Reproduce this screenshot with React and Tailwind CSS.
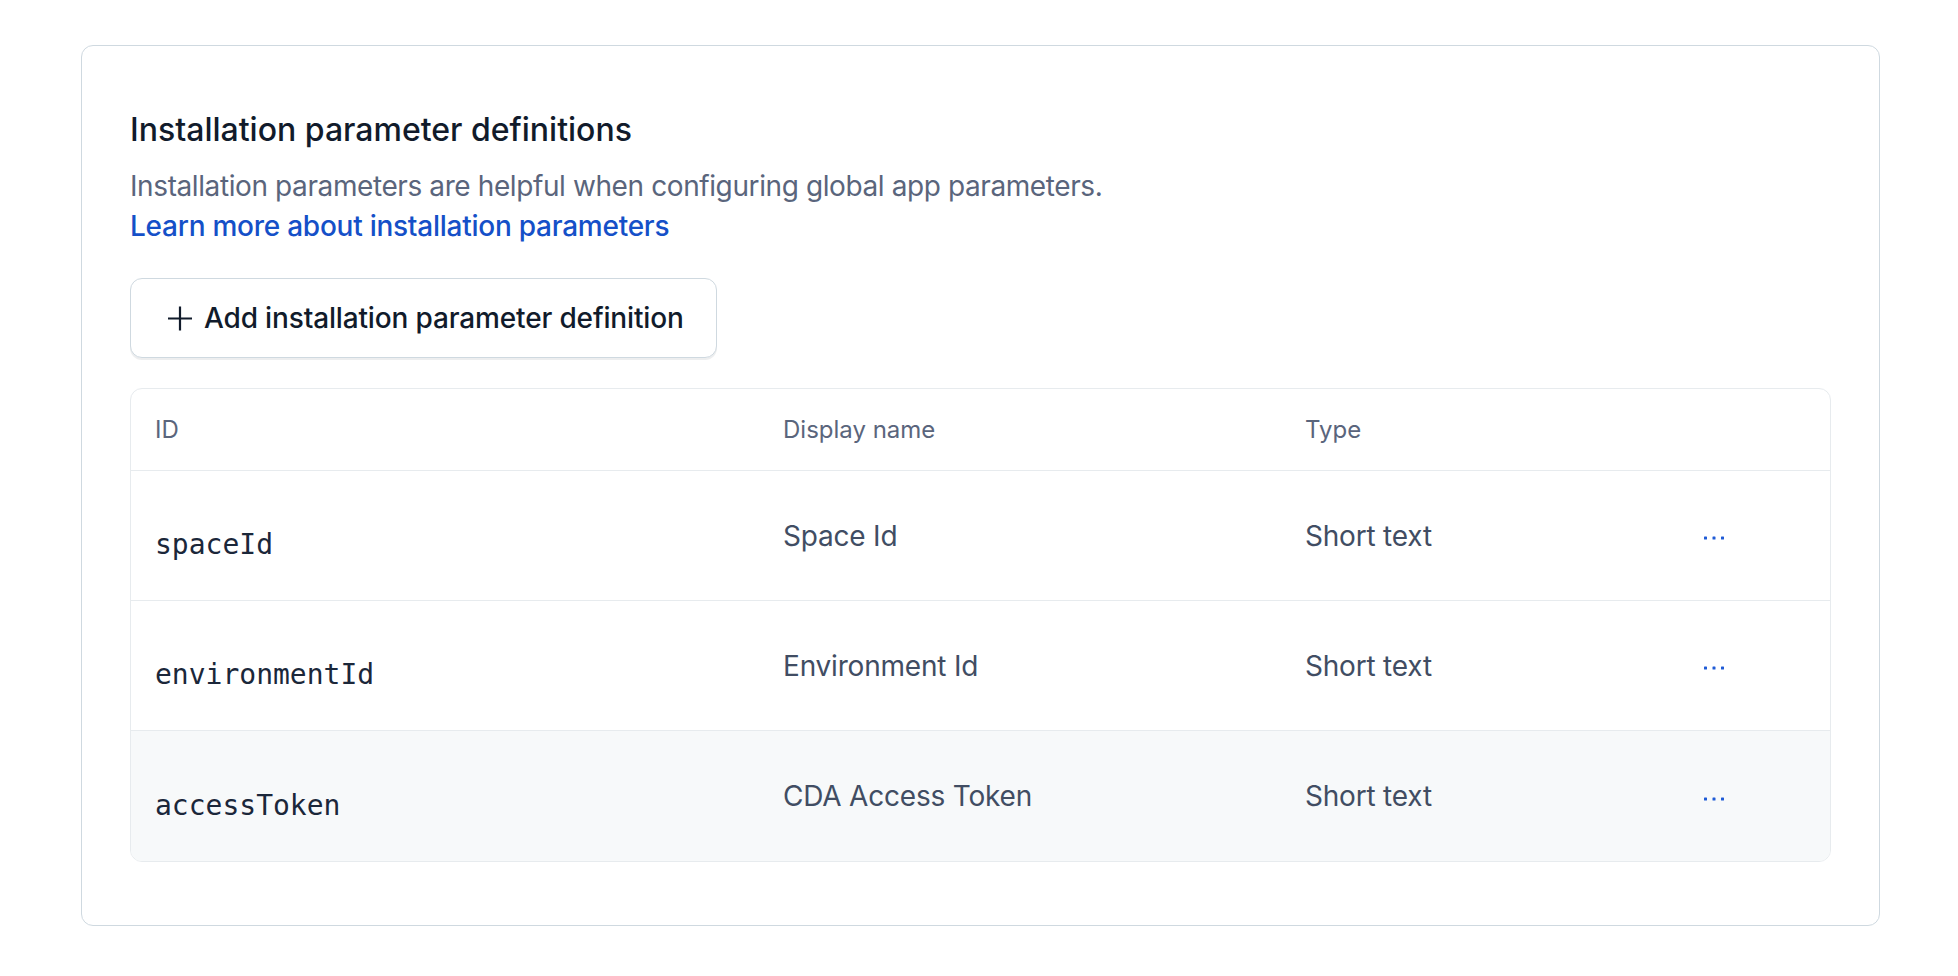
import React from "react";

const rows = [
  { id: "spaceId", name: "Space Id", type: "Short text", hover: false },
  { id: "environmentId", name: "Environment Id", type: "Short text", hover: false },
  { id: "accessToken", name: "CDA Access Token", type: "Short text", hover: true },
];

function Dots() {
  return (
    <svg width="22" height="4" viewBox="0 0 22 4" className="block">
      <rect x="0" y="0.5" width="3" height="3" rx="0.6" fill="#1f5bd6" />
      <rect x="8.5" y="0.5" width="3" height="3" rx="0.6" fill="#1f5bd6" />
      <rect x="17" y="0.5" width="3" height="3" rx="0.6" fill="#1f5bd6" />
    </svg>
  );
}

function PlusIcon() {
  return (
    <svg width="32" height="32" viewBox="0 0 32 32" className="block shrink-0">
      <path d="M16 4.5V28.5M4 16.5H28" stroke="#111b2b" strokeWidth="2.2" fill="none" />
    </svg>
  );
}

export default function App() {
  return (
    <div
      className="min-h-screen bg-white"
      style={{ fontFamily: "Inter, 'Noto Sans', sans-serif" }}
    >
      <div className="pt-[45px] pl-[81px]">
        <div className="w-[1799px] rounded-[12px] border border-[#cfd9e0] px-[48px] pt-[64px] pb-[63px]">
          <h2 className="text-[32px] leading-[40px] font-medium text-[#111b2b]">
            Installation parameter definitions
          </h2>
          <p className="mt-[16px] text-[28px] leading-[40px] text-[#5a657c] tracking-[-0.4px]">
            Installation parameters are helpful when configuring global app parameters.
          </p>
          <a className="block w-fit text-[28px] leading-[40px] text-[#1550c8] font-medium tracking-[-0.25px]">
            Learn more about installation parameters
          </a>
          <button className="mt-[32px] flex h-[80px] w-[587px] items-center gap-[8px] rounded-[12px] border border-[#cfd9e0] bg-white pl-[33px] shadow-[0_2px_0_rgba(25,37,50,0.08)]">
            <PlusIcon />
            <span className="text-[28px] leading-[40px] font-medium text-[#111b2b] tracking-[-0.15px]">
              Add installation parameter definition
            </span>
          </button>

          <div className="mt-[30px] overflow-hidden rounded-[12px] border border-[#e7ebee]">
            <div className="grid h-[82px] grid-cols-[628px_522px_400px_1fr] items-center border-b border-[#e7ebee] text-[24px] leading-[32px] text-[#5a657c]">
              <div className="pl-[24px]">ID</div>
              <div className="pl-[24px]">Display name</div>
              <div className="pl-[24px]">Type</div>
              <div />
            </div>
            {rows.map((r, i) => (
              <div
                key={r.id}
                className={
                  "grid h-[130px] grid-cols-[628px_522px_400px_1fr] items-center " +
                  (i < rows.length - 1 ? "border-b border-[#e7ebee] " : "") +
                  (r.hover ? "bg-[#f7f9fa]" : "bg-white")
                }
              >
                <div
                  className="pl-[24px] pt-[19px] text-[28px] leading-[40px] text-[#1b273a]"
                  style={{ fontFamily: "'DejaVu Sans Mono', 'Liberation Mono', monospace" }}
                >
                  {r.id}
                </div>
                <div className="pl-[24px] text-[28px] leading-[40px] text-[#414d63] tracking-[-0.2px]">{r.name}</div>
                <div className="pl-[24px] text-[28px] leading-[40px] text-[#414d63] tracking-[-0.2px]">{r.type}</div>
                <div className="pl-[23px] pt-[5px] flex items-center">
                  <Dots />
                </div>
              </div>
            ))}
          </div>
        </div>
      </div>
    </div>
  );
}
